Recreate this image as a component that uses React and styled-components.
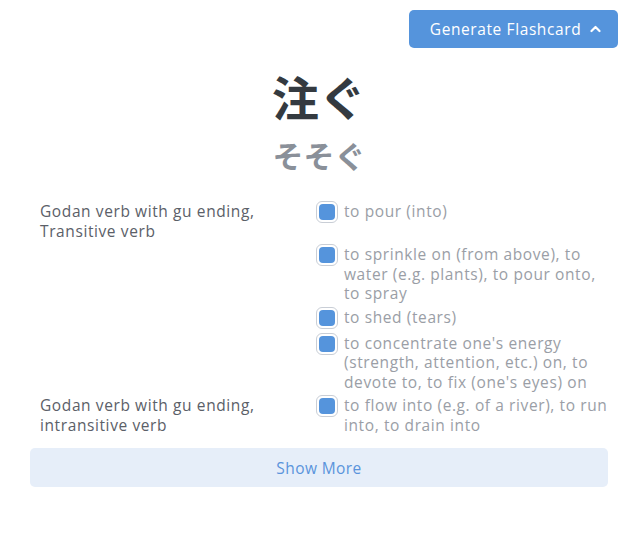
import React from "react";
import styled, { createGlobalStyle } from "styled-components";

const Global = createGlobalStyle`
  html, body { margin: 0; padding: 0; background: #ffffff; }
  body { font-family: "Open Sans", "Noto Sans", sans-serif; }
  * { box-sizing: border-box; }
`;

const Page = styled.div`
  width: 627px;
  min-height: 547px;
  padding: 10px 9px 0 30px;
  display: flex;
  flex-direction: column;
`;

const Toolbar = styled.div`
  display: flex;
  justify-content: flex-end;
`;

const PrimaryButton = styled.button`
  height: 38px;
  width: 209px;
  border: none;
  border-radius: 5px;
  background: #5594dc;
  color: #ffffff;
  font-family: inherit;
  font-size: 15.5px;
  letter-spacing: 0.6px;
  font-weight: 500;
  display: flex;
  align-items: center;
  justify-content: center;
  gap: 9px;
  padding: 0 0 0 4px;
  cursor: pointer;
`;

const Heading = styled.div`
  display: flex;
  flex-direction: column;
  align-items: center;
  margin-top: 18px;
  margin-right: 10px;
`;

const Kanji = styled.div`
  font-family: "Noto Sans CJK JP", sans-serif;
  font-weight: 700;
  font-size: 47px;
  line-height: 60px;
  color: #343a40;
`;

const Kana = styled.div`
  font-family: "Noto Sans CJK JP", sans-serif;
  font-weight: 700;
  font-size: 31px;
  line-height: 48px;
  margin-top: 5px;
  color: #8a9099;
`;

const SenseGrid = styled.div`
  display: grid;
  grid-template-columns: 286px 1fr;
  row-gap: 4px;
  margin-top: 23px;
  margin-right: 10px;
  font-size: 15.5px;
  letter-spacing: 0.6px;
  line-height: 19.5px;
`;

const Pos = styled.div`
  padding-left: 10px;
  padding-right: 8px;
  color: #5b6068;
`;

const Sense = styled.div`
  display: flex;
  align-items: flex-start;
  gap: 6px;
  color: #9a9ea6;
`;

const Check = styled.span`
  flex: none;
  width: 22px;
  height: 22px;
  border: 1px solid #c9ced6;
  border-radius: 6px;
  padding: 2px;
  margin-top: -1px;
  margin-bottom: 1px;
  background: #ffffff;
  display: flex;
`;

const CheckFill = styled.span`
  flex: 1;
  border-radius: 4px;
  background: #5594dc;
`;

const ShowMore = styled.button`
  margin-top: 13px;
  width: 578px;
  height: 39px;
  border: none;
  border-radius: 5px;
  background: #e6eef9;
  color: #5a94dc;
  font-family: inherit;
  font-size: 15.5px;
  letter-spacing: 0.4px;
  cursor: pointer;
`;

const groups = [
  {
    pos: "Godan verb with gu ending, Transitive verb",
    senses: [
      "to pour (into)",
      "to sprinkle on (from above), to water (e.g. plants), to pour onto, to spray",
      "to shed (tears)",
      "to concentrate one's energy (strength, attention, etc.) on, to devote to, to fix (one's eyes) on",
    ],
  },
  {
    pos: "Godan verb with gu ending, intransitive verb",
    senses: ["to flow into (e.g. of a river), to run into, to drain into"],
  },
];

export default function App() {
  return (
    <Page>
      <Global />
      <Toolbar>
        <PrimaryButton>
          Generate Flashcard
          <svg width="11" height="8" viewBox="0 0 11 8" fill="none">
            <path d="M1.5 6L5.5 2L9.5 6" stroke="#fff" strokeWidth="2.2" strokeLinecap="round" strokeLinejoin="round" />
          </svg>
        </PrimaryButton>
      </Toolbar>
      <Heading>
        <Kanji>注ぐ</Kanji>
        <Kana>そそぐ</Kana>
      </Heading>
      <SenseGrid>
        {groups.map((g) =>
          g.senses.map((s, i) => (
            <React.Fragment key={g.pos + i}>
              <Pos>{i === 0 ? g.pos : ""}</Pos>
              <Sense>
                <Check>
                  <CheckFill />
                </Check>
                <span>{s}</span>
              </Sense>
            </React.Fragment>
          ))
        )}
      </SenseGrid>
      <ShowMore>Show More</ShowMore>
    </Page>
  );
}
